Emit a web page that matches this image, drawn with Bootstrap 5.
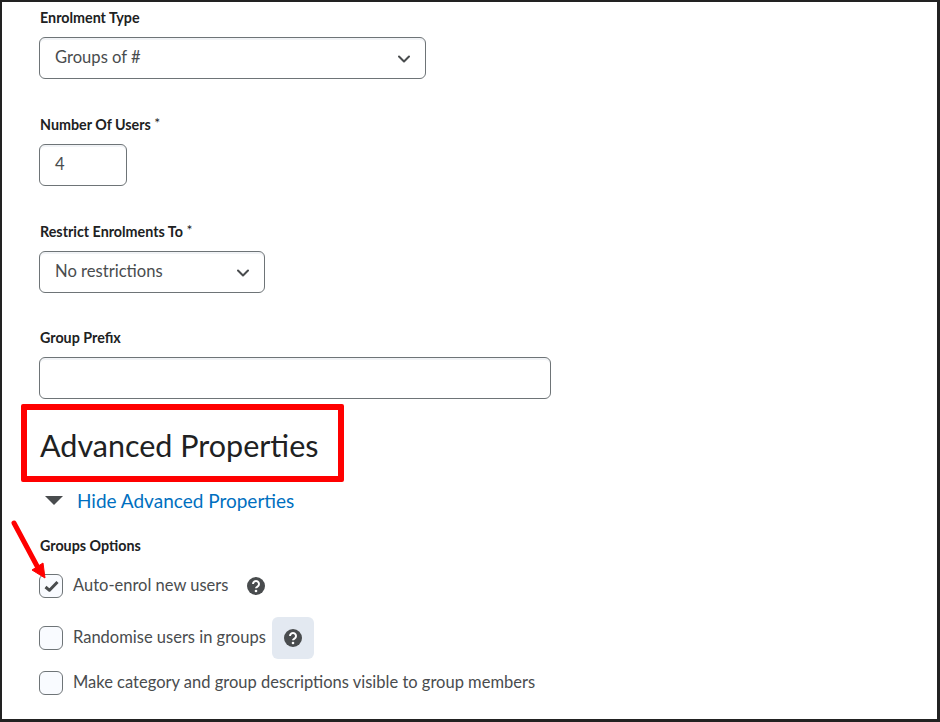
<!DOCTYPE html>
<html lang="en">
<head>
<meta charset="utf-8">
<title>Advanced Properties</title>
<link href="https://cdn.jsdelivr.net/npm/bootstrap@5.3.0/dist/css/bootstrap.min.css" rel="stylesheet">
<style>
html,body{height:100%;margin:0;background:#fff}
body{font-family:Lato,"Liberation Sans",sans-serif;color:#494c4e;overflow:hidden}
.shot-frame{position:relative;width:940px;height:722px;border:2px solid #222;border-right-width:3px;border-bottom-width:3px;padding:0 0 0 37px;box-sizing:border-box}
.fld-label{display:block;font-size:14.3px;font-weight:700;line-height:16px;color:#202122;margin:0 0 0 1px}
.fld-label sup{font-size:14px;font-weight:400;top:-.12em;line-height:0}
.fld-box{border:1px solid #6e7477;border-radius:6px;height:42px;background:#fff;display:flex;align-items:center;padding:0 15px 1px 15px;font-size:16.6px;color:#494c4e;box-shadow:inset 0 2px 0 rgba(185,194,208,.2)}
.fld-box svg{margin-top:3px}
.w-type{width:387px;margin-top:11px}
.w-num{width:88px;margin-top:11px}
.w-res{width:226px;margin-top:11px}
.w-pre{width:512px;margin-top:11px}
.lbl1{padding-top:8px}
.lbl2{margin-top:38px}
.lbl3{margin-top:38px}
.lbl4{margin-top:37px}
.redbox{display:inline-block;border:6px solid #f00;border-radius:2px;margin:5px 0 0 -18px;width:323px;height:78px;padding:0 0 0 13px}
.redbox h2{font-size:30.5px;font-weight:400;line-height:62px;margin:0;padding-top:4px;color:#202122;white-space:nowrap}
.hide-row{display:flex;align-items:center;margin-top:7px;height:24px}
.hide-row a{font-size:19px;color:#006fbf;text-decoration:none;margin-left:14px;line-height:24px}
.tri{width:0;height:0;border-left:9px solid transparent;border-right:9px solid transparent;border-top:9px solid #494c4e;margin-left:6px;margin-top:-2px}
.lbl5{margin-top:25px;line-height:16px}
.opt{display:flex;align-items:center;font-size:16.5px;color:#494c4e;white-space:nowrap;height:24px}
.opt > span:nth-child(2){position:relative;top:-1px}
.opt-1{margin-top:20px}
.opt-2{margin-top:28px}
.opt-3{margin-top:21px}
.chk{width:24px;height:24px;border:1px solid #6e7477;border-radius:6px;background:#f9fbff;margin-right:10px;flex:none;display:flex;align-items:center;justify-content:center}
.qs{flex:none;display:flex;align-items:center;justify-content:center}
.qs-1{margin-left:19px}
.qs-2{width:42px;height:42px;border-radius:6px;background:#e3e9f1;margin-left:6px}
.arrow{position:absolute;left:8px;top:517px;pointer-events:none}
</style>
</head>
<body>
<main class="shot-frame">
  <label class="fld-label lbl1">Enrolment Type</label>
  <div class="fld-box w-type justify-content-between">
    <span>Groups of #</span>
    <svg width="12" height="8" viewBox="0 0 12 8"><path d="M1 1.500 6 6.500l5-5" fill="none" stroke="#494c4e" stroke-width="2" stroke-linecap="round" stroke-linejoin="round"/></svg>
  </div>

  <label class="fld-label lbl2">Number Of Users <sup>*</sup></label>
  <div class="fld-box w-num"><span>4</span></div>

  <label class="fld-label lbl3">Restrict Enrolments To <sup>*</sup></label>
  <div class="fld-box w-res justify-content-between">
    <span>No restrictions</span>
    <svg width="12" height="8" viewBox="0 0 12 8"><path d="M1 1.500 6 6.500l5-5" fill="none" stroke="#494c4e" stroke-width="2" stroke-linecap="round" stroke-linejoin="round"/></svg>
  </div>

  <label class="fld-label lbl4">Group Prefix</label>
  <div class="fld-box w-pre"></div>

  <div class="redbox"><h2>Advanced Properties</h2></div>

  <div class="hide-row"><span class="tri"></span><a href="#">Hide Advanced Properties</a></div>

  <label class="fld-label lbl5">Groups Options</label>

  <div class="opt opt-1">
    <span class="chk"><svg width="15" height="12" viewBox="0 0 15 12"><path d="M1.500 7l4 3.300L13.500 2" fill="none" stroke="#494c4e" stroke-width="3" stroke-linejoin="round"/></svg></span>
    <span>Auto-enrol new users</span>
    <span class="qs qs-1"><svg width="18" height="18" viewBox="0 0 18 18"><circle cx="9" cy="9" r="9" fill="#494c4e"/><path d="M6 7a3 3 0 1 1 4.500 2.600C9.500 10.200 9 10.500 9 11.300" fill="none" stroke="#fff" stroke-width="2"/><circle cx="9" cy="14" r="1.300" fill="#fff"/></svg></span>
  </div>
  <div class="opt opt-2">
    <span class="chk"></span>
    <span>Randomise users in groups</span>
    <span class="qs qs-2"><svg width="18" height="18" viewBox="0 0 18 18"><circle cx="9" cy="9" r="9" fill="#494c4e"/><path d="M6 7a3 3 0 1 1 4.500 2.600C9.500 10.200 9 10.500 9 11.300" fill="none" stroke="#fff" stroke-width="2"/><circle cx="9" cy="14" r="1.300" fill="#fff"/></svg></span>
  </div>
  <div class="opt opt-3">
    <span class="chk"></span>
    <span>Make category and group descriptions visible to group members</span>
  </div>

  <svg class="arrow" width="40" height="66" viewBox="0 0 40 66"><path d="M4 4 27 47" stroke="#f00" stroke-width="5" stroke-linecap="round"/><path d="M22 51 33 44 35 59Z" fill="#f00" stroke="#f00" stroke-linejoin="round"/></svg>
</main>
<script src="https://cdn.jsdelivr.net/npm/bootstrap@5.3.0/dist/js/bootstrap.bundle.min.js"></script>
</body>
</html>
